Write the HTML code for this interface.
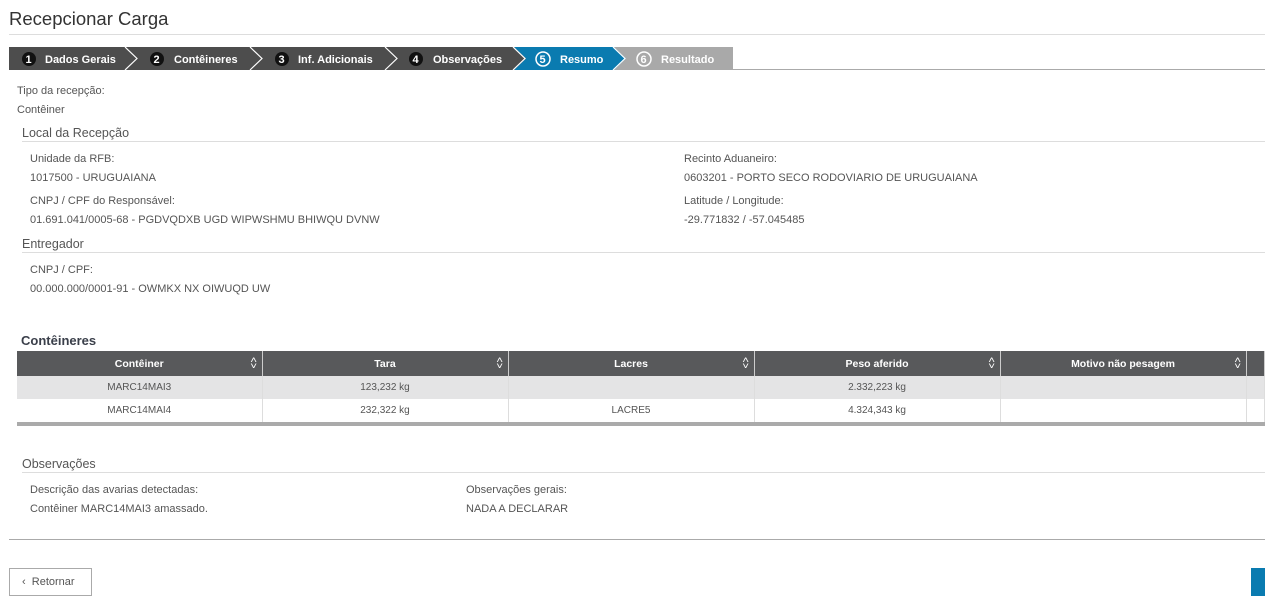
<!DOCTYPE html>
<html><head><meta charset="utf-8"><style>
*{margin:0;padding:0;box-sizing:border-box}
body{width:1265px;height:605px;background:#fff;font-family:"Liberation Sans",sans-serif;color:#555;position:relative;overflow:hidden;font-size:11px}
.a{position:absolute;white-space:nowrap}
.lbl{color:#555;font-size:11px;margin-top:1px}
.sec{color:#555;font-size:12.5px;margin-top:1px}
.hr{position:absolute;height:1px;background:#ddd}
table{border-collapse:collapse;position:absolute;left:17px;top:351px;width:1248px;table-layout:fixed}
th{background:#58595b;color:#fff;font-weight:bold;font-size:10.5px;height:25px;border-right:1px solid #ccc;position:relative;text-align:center}
th span{position:absolute;right:5px;top:6px;font-size:9px;font-weight:normal;line-height:6px;transform:scaleX(1.3)}
td{height:23px;font-size:10px;text-align:center;border-right:1px solid #ddd;color:#555}
tr.g td{background:#e4e4e5}
</style></head><body>
<div class="a" style="left:9px;top:8px;font-size:18.5px;color:#333">Recepcionar Carga</div>
<div class="hr" style="left:9px;top:34px;width:1256px"></div>
<svg class="a" style="left:0;top:47px" width="1265" height="25">
<rect x="9" y="0" width="505" height="23" fill="#4d4d4d"/>
<polygon points="514,0 614,0 626,11.5 614,23 514,23 526,11.5" fill="#0a7bb0"/>
<polygon points="514,0 526,11.5 514,23 505,23 505,0" fill="#4d4d4d"/>
<polygon points="614,0 733,0 733,23 614,23 626,11.5" fill="#a9a9a9"/>
<g fill="none" stroke="#fff" stroke-width="1.2">
<polyline points="125,0 137,11.5 125,23"/><polyline points="250,0 262,11.5 250,23"/><polyline points="385,0 397,11.5 385,23"/>
<polyline points="513,0 525,11.5 513,23"/><polyline points="613,0 625,11.5 613,23"/>
</g>
<line x1="733" y1="22.5" x2="1265" y2="22.5" stroke="#aaa"/>
<g font-family="Liberation Sans" font-size="11" font-weight="bold" fill="#fff">
<circle cx="29" cy="12" r="7" fill="#111"/><text x="25.5" y="16">1</text><text x="45" y="16">Dados Gerais</text>
<circle cx="157" cy="12" r="7" fill="#111"/><text x="153.5" y="16">2</text><text x="174" y="16">Contêineres</text>
<circle cx="282" cy="12" r="7" fill="#111"/><text x="278.5" y="16">3</text><text x="298" y="16">Inf. Adicionais</text>
<circle cx="416" cy="12" r="7" fill="#111"/><text x="412.5" y="16">4</text><text x="433" y="16">Observações</text>
<circle cx="543" cy="12" r="7" fill="none" stroke="#fff" stroke-width="1.5"/><text x="539.5" y="16">5</text><text x="560" y="16">Resumo</text>
<circle cx="644" cy="12" r="7" fill="none" stroke="#fff" stroke-width="1.5"/><text x="640.5" y="16">6</text><text x="661" y="16">Resultado</text>
</g></svg>
<div class="a lbl" style="left:17px;top:84px">Tipo da recepção:</div>
<div class="a lbl" style="left:17px;top:103px">Contêiner</div>
<div class="a sec" style="left:22px;top:125px">Local da Recepção</div>
<div class="hr" style="left:22px;top:141px;width:1243px"></div>
<div class="a lbl" style="left:30px;top:152px">Unidade da RFB:</div>
<div class="a lbl" style="left:30px;top:171px">1017500 - URUGUAIANA</div>
<div class="a lbl" style="left:684px;top:152px">Recinto Aduaneiro:</div>
<div class="a lbl" style="left:684px;top:171px">0603201 - PORTO SECO RODOVIARIO DE URUGUAIANA</div>
<div class="a lbl" style="left:30px;top:194px">CNPJ / CPF do Responsável:</div>
<div class="a lbl" style="left:30px;top:213px">01.691.041/0005-68 - PGDVQDXB UGD WIPWSHMU BHIWQU DVNW</div>
<div class="a lbl" style="left:684px;top:194px">Latitude / Longitude:</div>
<div class="a lbl" style="left:684px;top:213px">-29.771832 / -57.045485</div>
<div class="a sec" style="left:22px;top:236px">Entregador</div>
<div class="hr" style="left:22px;top:252px;width:1243px"></div>
<div class="a lbl" style="left:30px;top:263px">CNPJ / CPF:</div>
<div class="a lbl" style="left:30px;top:282px">00.000.000/0001-91 - OWMKX NX OIWUQD UW</div>
<div class="a" style="left:21px;top:333px;font-size:13px;font-weight:bold;color:#3a3f4a">Contêineres</div>
<table>
<colgroup><col style="width:245px"><col style="width:246px"><col style="width:246px"><col style="width:246px"><col style="width:246px"><col></colgroup>
<tr><th>Contêiner<span>˄<br>˅</span></th><th>Tara<span>˄<br>˅</span></th><th>Lacres<span>˄<br>˅</span></th><th>Peso aferido<span>˄<br>˅</span></th><th>Motivo não pesagem<span>˄<br>˅</span></th><th></th></tr>
<tr class="g"><td>MARC14MAI3</td><td>123,232 kg</td><td></td><td>2.332,223 kg</td><td></td><td></td></tr>
<tr><td>MARC14MAI4</td><td>232,322 kg</td><td>LACRE5</td><td>4.324,343 kg</td><td></td><td></td></tr>
</table>
<div class="a" style="left:17px;top:422px;width:1248px;height:4px;background:#aaa"></div>
<div class="a sec" style="left:22px;top:456px">Observações</div>
<div class="hr" style="left:22px;top:472px;width:1243px"></div>
<div class="a lbl" style="left:30px;top:483px">Descrição das avarias detectadas:</div>
<div class="a lbl" style="left:30px;top:502px">Contêiner MARC14MAI3 amassado.</div>
<div class="a lbl" style="left:466px;top:483px">Observações gerais:</div>
<div class="a lbl" style="left:466px;top:502px">NADA A DECLARAR</div>
<div class="a" style="left:9px;top:539px;width:1256px;height:1px;background:#aaa"></div>
<div class="a" style="left:9px;top:568px;width:83px;height:28px;border:1px solid #aaa;font-size:11px;color:#555;line-height:27px;padding-left:12px">‹&nbsp; Retornar</div>
<div class="a" style="left:1251px;top:568px;width:14px;height:28px;background:#0a7bb0"></div>
</body></html>
